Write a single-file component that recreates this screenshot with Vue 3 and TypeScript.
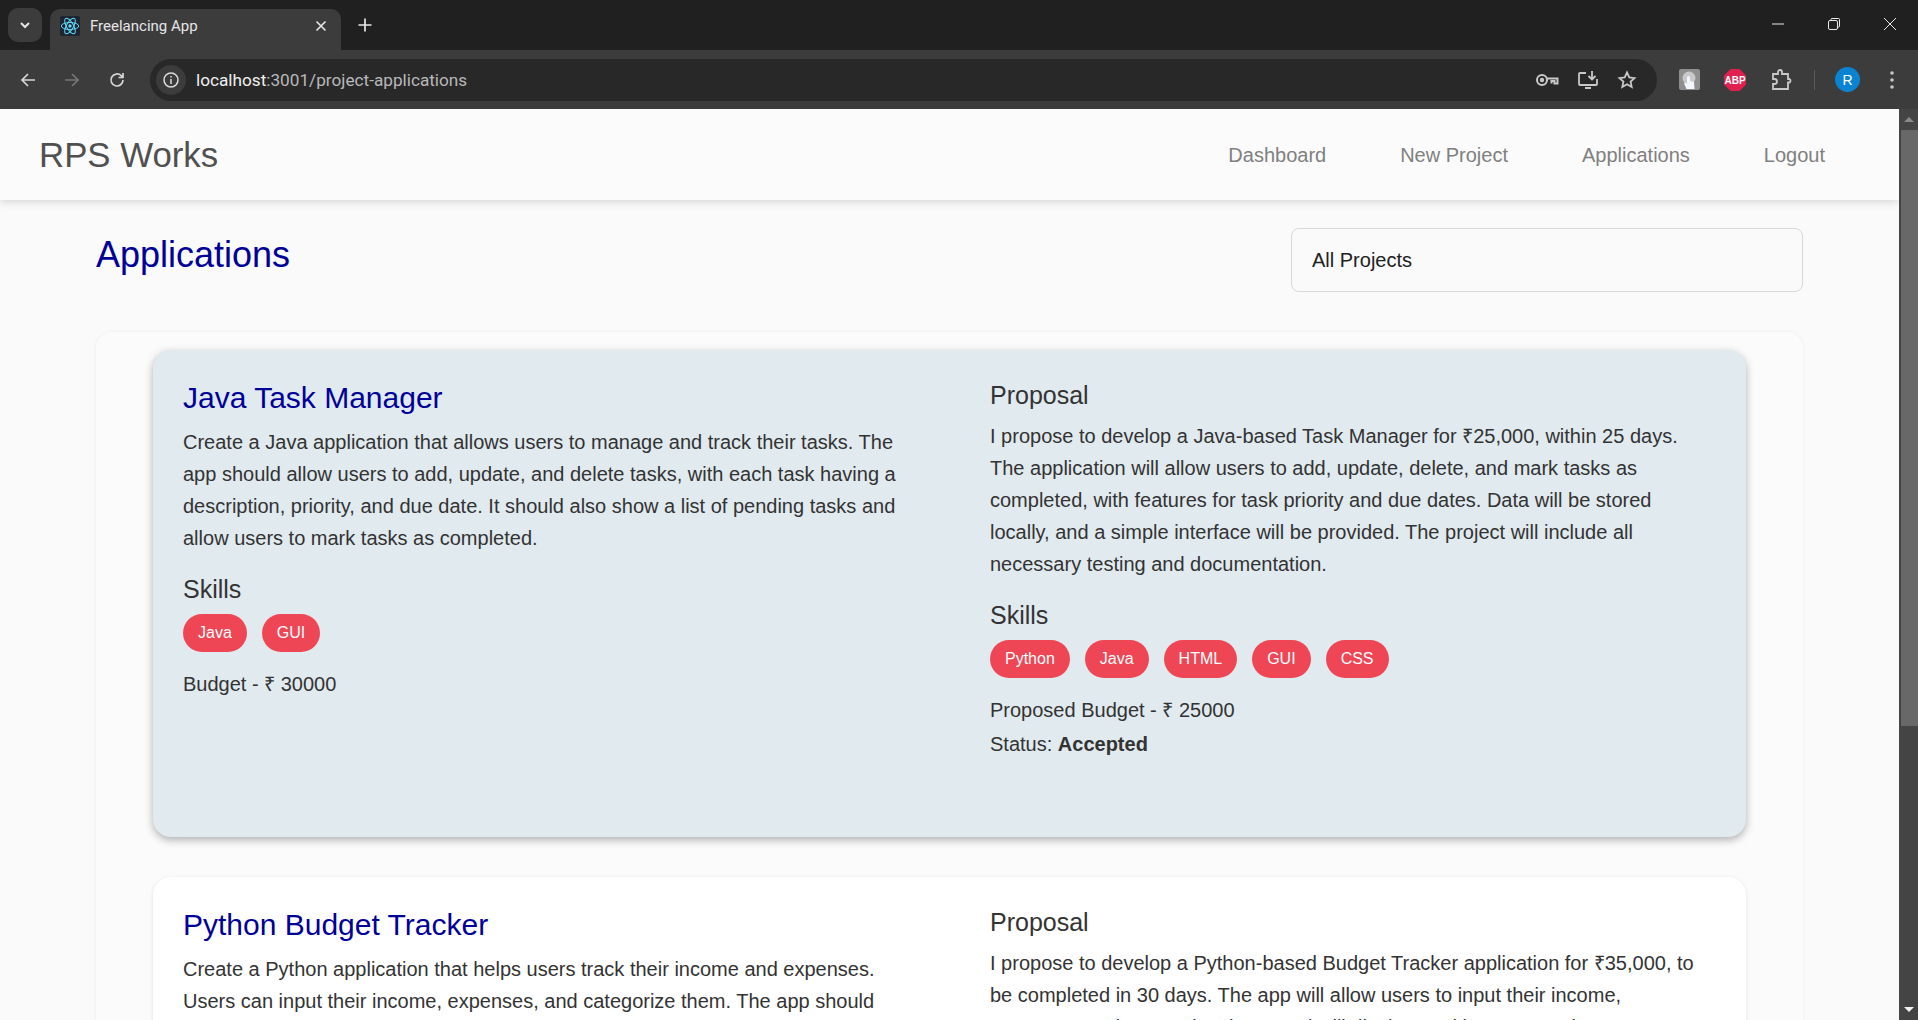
<script setup lang="ts">
type Application = {
  title: string
  description: string
  skills: string[]
  budget: number
  proposal: string
  proposedSkills: string[]
  proposedBudget: number
  status: string
  active: boolean
}

const navLinks = ['Dashboard', 'New Project', 'Applications', 'Logout']

const applications: Application[] = [
  {
    title: 'Java Task Manager',
    description:
      'Create a Java application that allows users to manage and track their tasks. The app should allow users to add, update, and delete tasks, with each task having a description, priority, and due date. It should also show a list of pending tasks and allow users to mark tasks as completed.',
    skills: ['Java', 'GUI'],
    budget: 30000,
    proposal:
      'I propose to develop a Java-based Task Manager for ₹25,000, within 25 days. The application will allow users to add, update, delete, and mark tasks as completed, with features for task priority and due dates. Data will be stored locally, and a simple interface will be provided. The project will include all necessary testing and documentation.',
    proposedSkills: ['Python', 'Java', 'HTML', 'GUI', 'CSS'],
    proposedBudget: 25000,
    status: 'Accepted',
    active: true,
  },
  {
    title: 'Python Budget Tracker',
    description:
      'Create a Python application that helps users track their income and expenses. Users can input their income, expenses, and categorize them. The app should',
    skills: ['Python'],
    budget: 35000,
    proposal:
      'I propose to develop a Python-based Budget Tracker application for ₹35,000, to be completed in 30 days. The app will allow users to input their income, expenses, and categorize them, and will display total income, total expenses, and',
    proposedSkills: ['Python'],
    proposedBudget: 35000,
    status: 'Pending',
    active: false,
  },
]
</script>

<template>
  <div class="window">
    <header class="tabstrip">
      <button class="tab-search" type="button">
        <svg width="12" height="12" viewBox="0 0 12 12"><path d="M2 4l4 4 4-4" fill="none" stroke="#e6e6e6" stroke-width="2" /></svg>
      </button>
      <div class="tab">
        <span class="favicon">
          <svg width="20" height="20" viewBox="0 0 24 24" fill="none" stroke="#61dafb" stroke-width="1.2">
            <circle cx="12" cy="12" r="2" fill="#61dafb" stroke="none" />
            <ellipse cx="12" cy="12" rx="10.500" ry="4.200" />
            <ellipse cx="12" cy="12" rx="10.500" ry="4.200" transform="rotate(60 12 12)" />
            <ellipse cx="12" cy="12" rx="10.500" ry="4.200" transform="rotate(120 12 12)" />
          </svg>
        </span>
        <span class="tab-title">Freelancing App</span>
        <svg class="tab-close" width="12" height="12" viewBox="0 0 12 12"><path d="M1.500 1.500l9 9M10.500 1.500l-9 9" stroke="#e8e8e8" stroke-width="1.600" /></svg>
      </div>
      <svg class="new-tab" width="16" height="16" viewBox="0 0 16 16"><path d="M8 1.500v13M1.500 8h13" stroke="#e8e8e8" stroke-width="1.700" /></svg>
      <div class="window-controls">
        <svg width="14" height="14" viewBox="0 0 14 14"><path d="M1 7h12" stroke="#e8e8e8" /></svg>
        <svg width="14" height="14" viewBox="0 0 14 14" fill="none" stroke="#e8e8e8"><rect x="1.500" y="3.500" width="9" height="9" rx="1.500" /><path d="M4 3.500V2.500a1 1 0 0 1 1-1h6.500a1 1 0 0 1 1 1V9a1 1 0 0 1-1 1h-1" /></svg>
        <svg width="14" height="14" viewBox="0 0 14 14"><path d="M1 1l12 12M13 1L1 13" stroke="#e8e8e8" /></svg>
      </div>
    </header>

    <div class="toolbar">
      <svg class="tool-icon" width="18" height="18" viewBox="0 0 18 18" fill="none" stroke="#d6d6d6" stroke-width="1.700"><path d="M16 9H3M9 3L3 9l6 6" /></svg>
      <svg class="tool-icon tool-icon--forward" width="18" height="18" viewBox="0 0 18 18" fill="none" stroke="#767676" stroke-width="1.700"><path d="M2 9h13M9 3l6 6-6 6" /></svg>
      <svg class="tool-icon tool-icon--reload" width="18" height="18" viewBox="0 0 18 18" fill="none" stroke="#d6d6d6" stroke-width="1.700"><path d="M15 9a6 6 0 1 1-1.800-4.300L15 6.500M15 2v4.500h-4.500" /></svg>
      <div class="omnibox">
        <span class="site-info">
          <svg width="18" height="18" viewBox="0 0 18 18" fill="none" stroke="#dcdcdc" stroke-width="1.500"><circle cx="9" cy="9" r="7" /><path d="M9 8v5M9 5v1.500" /></svg>
        </span>
        <span class="url"><span class="url-host">localhost</span>:3001/project-applications</span>
        <span class="omnibox-actions">
          <svg width="24" height="18" viewBox="0 0 24 18" fill="none" stroke="#c8c8c8" stroke-width="2"><circle cx="7" cy="9" r="5" /><circle cx="7" cy="9" r="1.200" /><path d="M12 7.500h10.500v5h-3V10h-3v2.500" /></svg>
          <svg width="22" height="20" viewBox="0 0 22 20" fill="none" stroke="#c8c8c8" stroke-width="1.800"><path d="M9 3H3a1 1 0 0 0-1 1v10a1 1 0 0 0 1 1h16a1 1 0 0 0 1-1V9M15 1v8M11.500 6l3.500 3.500L18.500 6M8 18h6" /></svg>
          <svg width="20" height="20" viewBox="0 0 20 20" fill="none" stroke="#c8c8c8" stroke-width="1.800"><path d="M10 2.500l2.300 5 5.200.6-3.900 3.500 1.100 5.400-4.700-2.700-4.700 2.700 1.100-5.400L2.500 8.100l5.200-.6z" /></svg>
        </span>
      </div>
      <div class="extensions">
        <svg width="21" height="21" viewBox="0 0 21 21">
          <rect width="21" height="21" rx="2" fill="#8f8f8f" />
          <circle cx="10" cy="9" r="6.500" fill="#c9c9c9" />
          <path d="M8 8.500a1.500 1.500 0 0 1 3 0V12l4 1 .5 7H7.500L5 14.500l1.500-1L8 15z" fill="#f3f6ff" />
        </svg>
        <svg width="22" height="22" viewBox="0 0 22 22"><path d="M6.500 0h9L22 6.500v9L15.500 22h-9L0 15.500v-9z" fill="#e0204f" /><text x="11" y="14.800" text-anchor="middle" class="abp">ABP</text></svg>
        <svg width="22" height="22" viewBox="0 0 22 22" fill="none" stroke="#c8c8c8" stroke-width="1.800"><path d="M3 5h5V3a2 2 0 0 1 4 0v2h6v5h1.500a2 2 0 0 1 0 3.500H18V20H3v-5h1.500a2.500 2.500 0 0 0 0-5H3z" /></svg>
        <span class="divider"></span>
        <span class="avatar">R</span>
        <svg class="menu-dots" width="6" height="20" viewBox="0 0 6 20" fill="#c8c8c8"><circle cx="3" cy="3" r="1.800" /><circle cx="3" cy="10" r="1.800" /><circle cx="3" cy="17" r="1.800" /></svg>
      </div>
    </div>

    <div class="viewport">
      <div class="page">
        <nav class="navbar">
          <span class="brand">RPS Works</span>
          <div class="nav-links">
            <a v-for="link in navLinks" :key="link" class="nav-link">{{ link }}</a>
          </div>
        </nav>

        <main class="content">
          <div class="content-head">
            <h1 class="page-title">Applications</h1>
            <div class="project-select">All Projects</div>
          </div>

          <section class="panel">
            <article
              v-for="app in applications"
              :key="app.title"
              class="app-card"
              :class="{ 'app-card--active': app.active }"
            >
              <div class="app-col app-col--project">
                <h2 class="app-title">{{ app.title }}</h2>
                <p class="app-text">{{ app.description }}</p>
                <h3 class="app-sub app-sub--skills">Skills</h3>
                <div class="chips">
                  <span v-for="skill in app.skills" :key="skill" class="chip">{{ skill }}</span>
                </div>
                <p class="app-line">Budget - ₹ {{ app.budget }}</p>
              </div>
              <div class="app-col app-col--proposal">
                <h3 class="app-sub">Proposal</h3>
                <p class="app-text">{{ app.proposal }}</p>
                <h3 class="app-sub app-sub--skills">Skills</h3>
                <div class="chips">
                  <span v-for="skill in app.proposedSkills" :key="skill" class="chip">{{ skill }}</span>
                </div>
                <p class="app-line">Proposed Budget - ₹ {{ app.proposedBudget }}</p>
                <p class="app-line app-line--status">Status: <b>{{ app.status }}</b></p>
              </div>
            </article>
          </section>
        </main>
      </div>

      <div class="scrollbar">
        <span class="scroll-btn"><i class="arrow-up"></i></span>
        <span class="scroll-thumb"></span>
        <span class="scroll-track"></span>
        <span class="scroll-btn"><i class="arrow-down"></i></span>
      </div>
    </div>
  </div>
</template>

<style scoped>
.window {
  width: 1918px;
  height: 1020px;
  display: flex;
  flex-direction: column;
  overflow: hidden;
  font-family: 'Liberation Sans', Arial, sans-serif;
  background: #fafafa;
}

.tabstrip {
  height: 50px;
  flex: none;
  display: flex;
  align-items: flex-end;
  background: #202020;
  padding-left: 8px;
}

.tab-search {
  width: 34px;
  height: 34px;
  margin-bottom: 8px;
  border: 0;
  border-radius: 10px;
  background: #3c3c3c;
  display: flex;
  align-items: center;
  justify-content: center;
  padding: 0;
}

.tab {
  width: 291px;
  height: 41px;
  margin-left: 8px;
  padding: 0 14px 8px 10px;
  box-sizing: border-box;
  display: flex;
  align-items: center;
  background: #3c3c3c;
  border-radius: 10px 10px 0 0;
}

.favicon {
  width: 20px;
  height: 20px;
  background: #1c2530;
  border-radius: 2px;
  display: flex;
  align-items: center;
  justify-content: center;
}

.tab-title {
  margin-left: 10px;
  flex: 1;
  color: #e6e6e6;
  font-size: 15px;
  font-family: Roboto, 'Liberation Sans', sans-serif;
}

.new-tab {
  margin: 0 0 17px 16px;
}

.window-controls {
  margin-left: auto;
  display: flex;
  align-items: center;
  gap: 42px;
  padding: 0 21px 19px 0;
}

.toolbar {
  height: 59px;
  flex: none;
  display: flex;
  align-items: center;
  background: #3c3c3c;
  padding: 0 0 0 19px;
}

.tool-icon {
  margin-right: 26px;
}

.tool-icon--forward {
  margin-right: 27px;
}

.tool-icon--reload {
  margin-right: 24px;
}

.omnibox {
  width: 1507px;
  height: 42px;
  display: flex;
  align-items: center;
  background: #282828;
  border-radius: 21px;
  padding: 0 20px 0 6px;
  box-sizing: border-box;
}

.site-info {
  width: 30px;
  height: 30px;
  border-radius: 50%;
  background: #3c3c3c;
  display: flex;
  align-items: center;
  justify-content: center;
}

.url {
  margin-left: 10px;
  color: #b8b8b8;
  font-size: 17.200px;
  font-family: Roboto, 'Liberation Sans', sans-serif;
}

.url-host {
  color: #f0f0f0;
}

.omnibox-actions {
  margin-left: auto;
  display: flex;
  align-items: center;
  gap: 18px;
}

.extensions {
  display: flex;
  align-items: center;
  margin-left: 22px;
  gap: 24px;
}

.abp {
  font-size: 10px;
  font-weight: 700;
  fill: #fff;
}

.divider {
  width: 1px;
  height: 20px;
  background: #5c5c5c;
  margin: 0 -4px 0 -2px;
}

.avatar {
  width: 25px;
  height: 25px;
  border-radius: 50%;
  background: #0a84d0;
  color: #fff;
  font-size: 14px;
  display: flex;
  align-items: center;
  justify-content: center;
}

.menu-dots {
  margin-left: 5px;
}

.viewport {
  flex: 1;
  min-height: 0;
  display: flex;
}

.page {
  flex: 1;
  min-width: 0;
  background: #fafafa;
  overflow: hidden;
}

.navbar {
  height: 91px;
  box-sizing: border-box;
  padding: 0 74px 0 39px;
  display: flex;
  align-items: center;
  justify-content: space-between;
  background: #fbfbfb;
  box-shadow: 0 2px 8px rgba(0, 0, 0, 0.15);
  position: relative;
}

.brand {
  font-size: 34.800px;
  color: #505050;
}

.nav-links {
  display: flex;
  gap: 74px;
  padding-top: 2px;
}

.nav-link {
  font-size: 20px;
  color: #808080;
}

.content {
  padding: 28px 96px 0;
}

.content-head {
  display: flex;
  justify-content: space-between;
  align-items: flex-start;
}

.page-title {
  margin: 3px 0 0;
  font-size: 36px;
  font-weight: 400;
  color: #000099;
  line-height: 48px;
}

.project-select {
  width: 512px;
  height: 64px;
  box-sizing: border-box;
  display: flex;
  align-items: center;
  padding-left: 20px;
  border: 1px solid #d8d8d8;
  border-radius: 8px;
  font-size: 20px;
  color: #212121;
  background: #fafafa;
}

.panel {
  margin-top: 40px;
  padding: 18px 57px 0;
  border-radius: 16px;
  box-shadow: 0 0 4px rgba(0, 0, 0, 0.06);
  background: #fbfbfb;
}

.app-card {
  display: flex;
  min-height: 487px;
  box-sizing: border-box;
  margin-bottom: 40px;
  padding: 30px 30px;
  border-radius: 18px;
  background: #fff;
  box-shadow: 0 1px 4px rgba(0, 0, 0, 0.1);
}

.app-card--active {
  background: #e1eaef;
  box-shadow: 0 3px 8px rgba(0, 0, 0, 0.3);
}

.app-col {
  flex: 1;
  min-width: 0;
}

.app-col--project {
  padding-right: 70px;
  flex: none;
  width: 807px;
  box-sizing: border-box;
}

.app-col--proposal {
  padding-right: 20px;
}

.app-title {
  margin: 0 0 10px;
  font-size: 30px;
  font-weight: 400;
  line-height: 36px;
  color: #000099;
}

.app-sub {
  margin: 0 0 10px;
  font-size: 25px;
  font-weight: 400;
  line-height: 30px;
  color: #333;
}

.app-sub--skills {
  margin-top: 20px;
}

.app-text {
  margin: 0;
  font-size: 20px;
  line-height: 32px;
  color: #333;
}

.chips {
  display: flex;
  gap: 15px;
  margin: 0 0 16px;
}

.chip {
  height: 38px;
  padding: 0 15px;
  display: flex;
  align-items: center;
  border-radius: 19px;
  background: #ef4655;
  color: #fff;
  font-size: 16px;
}

.app-line {
  margin: 0;
  font-size: 20px;
  line-height: 32px;
  color: #333;
}

.app-line--status {
  margin-top: 2px;
}

.scrollbar {
  width: 19px;
  flex: none;
  display: flex;
  flex-direction: column;
  background: #444;
}

.scroll-btn {
  height: 21px;
  flex: none;
  display: flex;
  align-items: center;
  justify-content: center;
}

.scroll-thumb {
  height: 596px;
  flex: none;
  margin-left: 2px;
  background: #686868;
}

.scroll-track {
  flex: 1;
}

.arrow-up {
  border: 5px solid transparent;
  border-top: 0;
  border-bottom: 5px solid #8a8a8a;
}

.arrow-down {
  border: 5px solid transparent;
  border-bottom: 0;
  border-top: 5px solid #f2f2f2;
}
</style>
